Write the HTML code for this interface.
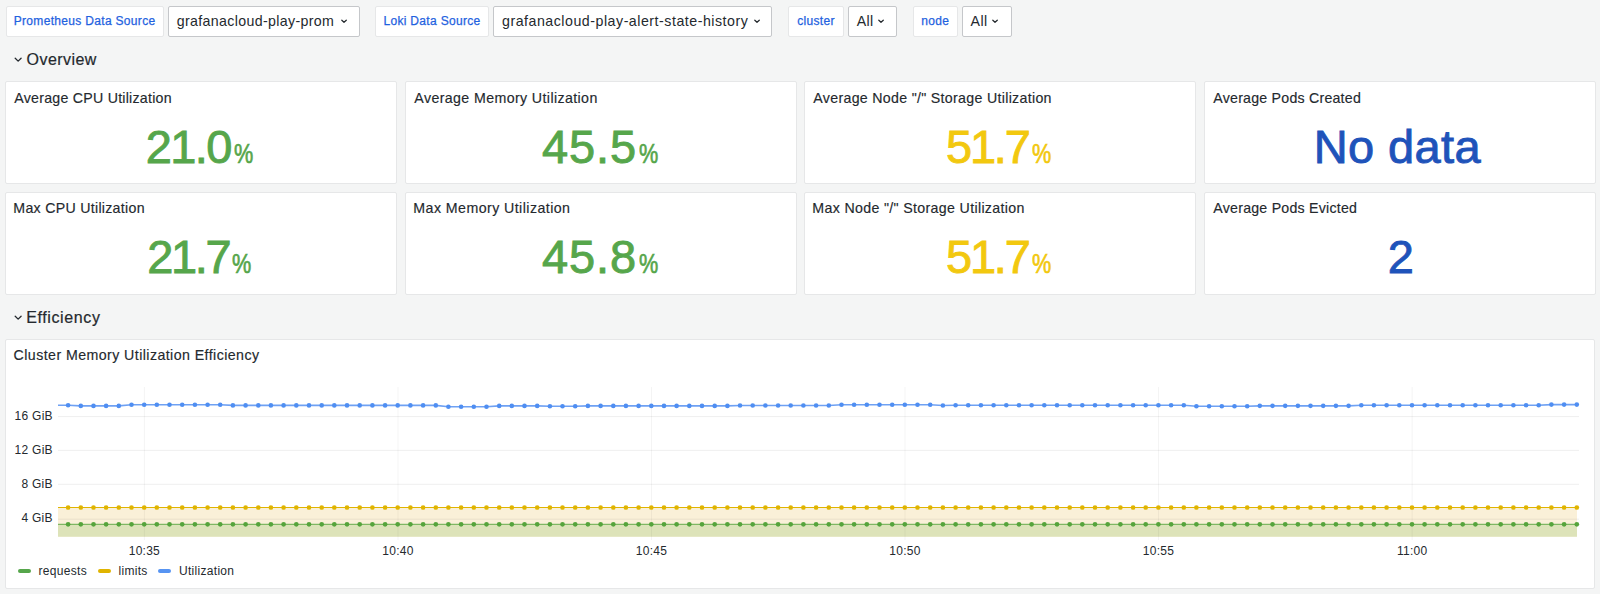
<!DOCTYPE html>
<html><head><meta charset="utf-8">
<style>
html,body{margin:0;padding:0;}
body{width:1600px;height:594px;overflow:hidden;background:#f4f5f5;position:relative;font-family:"Liberation Sans",sans-serif;color:#24292e;}
.vlab{position:absolute;top:6px;height:29px;background:#fff;border:1px solid #e6e7e8;border-radius:2px;color:#1f62e0;font-size:12px;line-height:28.6px;text-align:center;box-sizing:content-box;letter-spacing:0.32px;-webkit-text-stroke:0.25px #1f62e0;}
.vsel{position:absolute;top:6.2px;height:28.4px;background:#fff;border:1px solid #c5c7ca;border-radius:2px;font-size:14.2px;line-height:28px;color:#24292e;}
.vtxt{position:absolute;left:8px;top:0.2px;letter-spacing:0.35px;white-space:nowrap;}
.chev{position:absolute;top:11.5px;}
.row{position:absolute;font-size:16px;color:#24292e;letter-spacing:0.45px;-webkit-text-stroke:0.2px #24292e;}
.rchev{position:absolute;}
.panel{position:absolute;background:#fff;border:1px solid #e6e7e8;border-radius:2px;box-sizing:border-box;}
.ptitle{position:absolute;left:8.3px;top:7.6px;font-size:14.2px;letter-spacing:0.24px;-webkit-text-stroke:0.15px #24292e;white-space:nowrap;color:#24292e;}
.stat{position:absolute;left:0;right:0;top:37.6px;text-align:center;white-space:nowrap;}
.num{font-size:47px;letter-spacing:-1.6px;-webkit-text-stroke:0.9px currentColor;}
.unit{font-size:28.5px;margin-left:3px;margin-right:-3px;display:inline-block;transform:scaleX(0.76);transform-origin:left;-webkit-text-stroke:0.7px currentColor;}
.g{color:#56a64b;} .y{color:#f2c80f;} .b{color:#1f53ba;}
.cpanel{position:absolute;left:5px;top:339px;width:1590px;height:250px;background:#fff;border:1px solid #e6e7e8;border-radius:2px;box-sizing:border-box;}
.ax{font-family:"Liberation Sans",sans-serif;font-size:12px;fill:#24292e;letter-spacing:0.25px;}
.leg{position:absolute;top:564px;font-size:12px;color:#24292e;white-space:nowrap;letter-spacing:0.3px;}
.ldash{position:absolute;top:569.3px;width:13.2px;height:4px;border-radius:2px;}
</style></head><body>
<div class="vlab" style="left:5.6px;width:156px">Prometheus Data Source</div><div class="vsel" style="left:167.7px;width:190.4px"><span class="vtxt" style="letter-spacing:0.35px">grafanacloud-play-prom</span><span class="chev" style="left:171.5px"><svg width="8" height="6" viewBox="0 0 8 6" style="display:block"><path d="M1.8 1.2 L4 3.3 L6.3 1.2" fill="none" stroke="#24292e" stroke-width="1.25" stroke-linecap="round" stroke-linejoin="round"/></svg></span></div>
<div class="vlab" style="left:375px;width:112px">Loki Data Source</div><div class="vsel" style="left:493px;width:276.5px"><span class="vtxt" style="letter-spacing:0.52px">grafanacloud-play-alert-state-history</span><span class="chev" style="left:259px"><svg width="8" height="6" viewBox="0 0 8 6" style="display:block"><path d="M1.8 1.2 L4 3.3 L6.3 1.2" fill="none" stroke="#24292e" stroke-width="1.25" stroke-linecap="round" stroke-linejoin="round"/></svg></span></div>
<div class="vlab" style="left:787.7px;width:54.5px">cluster</div><div class="vsel" style="left:847.8px;width:47.5px"><span class="vtxt" style="letter-spacing:0.35px">All</span><span class="chev" style="left:28.5px"><svg width="8" height="6" viewBox="0 0 8 6" style="display:block"><path d="M1.8 1.2 L4 3.3 L6.3 1.2" fill="none" stroke="#24292e" stroke-width="1.25" stroke-linecap="round" stroke-linejoin="round"/></svg></span></div>
<div class="vlab" style="left:912.5px;width:43.5px">node</div><div class="vsel" style="left:961.6px;width:48.5px"><span class="vtxt" style="letter-spacing:0.35px">All</span><span class="chev" style="left:28.5px"><svg width="8" height="6" viewBox="0 0 8 6" style="display:block"><path d="M1.8 1.2 L4 3.3 L6.3 1.2" fill="none" stroke="#24292e" stroke-width="1.25" stroke-linecap="round" stroke-linejoin="round"/></svg></span></div>
<div class="rchev" style="left:14.3px;top:57.2px"><svg width="10" height="7" viewBox="0 0 10 7" style="display:block"><path d="M1.2 1.2 L4.15 4.15 L7.1 1.2" fill="none" stroke="#24292e" stroke-width="1.3" stroke-linecap="round" stroke-linejoin="round"/></svg></div>
<div class="row" style="left:26.6px;top:50.5px">Overview</div>
<div class="panel" style="left:5px;top:81px;width:392px;height:103px"><div class="ptitle" style="top:7.6px;letter-spacing:0.244px">Average CPU Utilization</div><div class="stat g" style="top:37.1px"><span class="num" style="letter-spacing:-1.6px">21.0</span><span class="unit">%</span></div></div>
<div class="panel" style="left:405px;top:81px;width:392px;height:103px"><div class="ptitle" style="top:7.6px;letter-spacing:0.391px">Average Memory Utilization</div><div class="stat g" style="top:37.1px"><span class="num" style="letter-spacing:0.9px;position:relative;left:1.2px">45.5</span><span class="unit">%</span></div></div>
<div class="panel" style="left:804px;top:81px;width:392px;height:103px"><div class="ptitle" style="top:7.6px;letter-spacing:0.306px">Average Node "/" Storage Utilization</div><div class="stat y" style="top:37.1px"><span class="num" style="letter-spacing:-2.2px">51.7</span><span class="unit">%</span></div></div>
<div class="panel" style="left:1204px;top:81px;width:392px;height:103px"><div class="ptitle" style="top:7.6px;letter-spacing:0.221px">Average Pods Created</div><div class="stat b" style="top:37.1px"><span class="num" style="letter-spacing:0.4px;position:relative;left:-2.6px">No data</span></div></div>
<div class="panel" style="left:5px;top:192px;width:392px;height:103px"><div class="ptitle" style="top:6.8999999999999995px;left:7.3px;letter-spacing:0.282px">Max CPU Utilization</div><div class="stat g" style="top:36.4px"><span class="num" style="letter-spacing:-2.3px">21.7</span><span class="unit">%</span></div></div>
<div class="panel" style="left:405px;top:192px;width:392px;height:103px"><div class="ptitle" style="top:6.8999999999999995px;left:7.3px;letter-spacing:0.439px">Max Memory Utilization</div><div class="stat g" style="top:36.4px"><span class="num" style="letter-spacing:0.9px;position:relative;left:1.2px">45.8</span><span class="unit">%</span></div></div>
<div class="panel" style="left:804px;top:192px;width:392px;height:103px"><div class="ptitle" style="top:6.8999999999999995px;left:7.3px;letter-spacing:0.336px">Max Node "/" Storage Utilization</div><div class="stat y" style="top:36.4px"><span class="num" style="letter-spacing:-2.2px">51.7</span><span class="unit">%</span></div></div>
<div class="panel" style="left:1204px;top:192px;width:392px;height:103px"><div class="ptitle" style="top:6.8999999999999995px;letter-spacing:0.229px">Average Pods Evicted</div><div class="stat b" style="top:36.4px"><span class="num" style="">2</span></div></div>
<div class="rchev" style="left:14.2px;top:315.2px"><svg width="10" height="7" viewBox="0 0 10 7" style="display:block"><path d="M1.2 1.2 L4.15 4.15 L7.1 1.2" fill="none" stroke="#24292e" stroke-width="1.3" stroke-linecap="round" stroke-linejoin="round"/></svg></div>
<div class="row" style="left:26.3px;top:308.7px;letter-spacing:0.6px">Efficiency</div>
<div class="cpanel"><div class="ptitle" style="top:6.6px;left:7.6px;letter-spacing:0.43px">Cluster Memory Utilization Efficiency</div></div>
<svg width="1600" height="594" viewBox="0 0 1600 594" style="position:absolute;left:0;top:0">
<rect x="58" y="507.5" width="1519" height="29.200000000000045" fill="#faf0d8"/>
<rect x="58" y="524.3" width="1519" height="12.400000000000091" fill="#dde3b9"/>
<line x1="58" y1="416.6" x2="1579" y2="416.6" stroke="rgba(36,41,46,0.075)" stroke-width="1"/>
<line x1="58" y1="450.4" x2="1579" y2="450.4" stroke="rgba(36,41,46,0.075)" stroke-width="1"/>
<line x1="58" y1="484.3" x2="1579" y2="484.3" stroke="rgba(36,41,46,0.075)" stroke-width="1"/>
<line x1="58" y1="519.2" x2="1579" y2="519.2" stroke="rgba(36,41,46,0.075)" stroke-width="1"/>
<line x1="144.4" y1="387" x2="144.4" y2="540" stroke="rgba(36,41,46,0.05)" stroke-width="1"/>
<line x1="398.0" y1="387" x2="398.0" y2="540" stroke="rgba(36,41,46,0.05)" stroke-width="1"/>
<line x1="651.5" y1="387" x2="651.5" y2="540" stroke="rgba(36,41,46,0.05)" stroke-width="1"/>
<line x1="905.0" y1="387" x2="905.0" y2="540" stroke="rgba(36,41,46,0.05)" stroke-width="1"/>
<line x1="1158.5" y1="387" x2="1158.5" y2="540" stroke="rgba(36,41,46,0.05)" stroke-width="1"/>
<line x1="1412.2" y1="387" x2="1412.2" y2="540" stroke="rgba(36,41,46,0.05)" stroke-width="1"/>
<line x1="58" y1="507.5" x2="1577" y2="507.5" stroke="#e0b400" stroke-width="1.2"/>
<line x1="58" y1="524.3" x2="1577" y2="524.3" stroke="#7fb763" stroke-width="1.3"/>
<polyline points="58.0,405.30 68.1,405.30 80.8,405.90 93.5,405.90 106.1,405.90 118.8,405.90 131.5,404.75 144.2,404.75 156.8,404.75 169.5,404.75 182.2,404.75 194.9,404.75 207.6,404.75 220.2,404.75 232.9,405.40 245.6,405.40 258.3,405.40 270.9,405.40 283.6,405.40 296.3,405.40 309.0,405.40 321.7,405.40 334.3,405.40 347.0,405.40 359.7,405.40 372.4,405.40 385.1,405.40 397.7,405.40 410.4,405.40 423.1,405.40 435.8,405.40 448.4,406.80 461.1,406.80 473.8,406.80 486.5,406.80 499.2,405.90 511.8,405.90 524.5,405.90 537.2,405.90 549.9,406.25 562.5,406.25 575.2,406.25 587.9,405.90 600.6,405.90 613.3,405.90 625.9,405.90 638.6,405.90 651.3,405.90 664.0,405.90 676.6,405.90 689.3,405.90 702.0,405.90 714.7,405.90 727.4,405.90 740.0,405.50 752.7,405.50 765.4,405.50 778.1,405.50 790.7,405.50 803.4,405.50 816.1,405.50 828.8,405.50 841.5,404.75 854.1,404.75 866.8,404.75 879.5,404.75 892.2,404.75 904.8,404.75 917.5,404.75 930.2,404.75 942.9,405.50 955.6,405.30 968.2,405.30 980.9,405.30 993.6,405.30 1006.3,405.30 1019.0,405.30 1031.6,405.30 1044.3,405.30 1057.0,405.30 1069.7,405.30 1082.3,405.30 1095.0,405.30 1107.7,405.30 1120.4,405.30 1133.1,405.30 1145.7,405.30 1158.4,405.30 1171.1,405.30 1183.8,405.30 1196.4,406.25 1209.1,406.25 1221.8,406.25 1234.5,406.25 1247.2,406.25 1259.8,405.85 1272.5,405.85 1285.2,405.85 1297.9,405.85 1310.5,405.85 1323.2,405.85 1335.9,405.85 1348.6,405.85 1361.3,405.20 1373.9,405.20 1386.6,405.20 1399.3,405.20 1412.0,405.20 1424.6,405.20 1437.3,405.20 1450.0,405.20 1462.7,405.20 1475.4,405.20 1488.0,405.20 1500.7,405.20 1513.4,405.20 1526.1,405.20 1538.7,405.20 1551.4,404.60 1564.1,404.60 1576.8,404.60" fill="none" stroke="#6fa1f3" stroke-width="1.6"/>
<g fill="#e0b400"><circle cx="68.1" cy="507.5" r="2.35"/><circle cx="80.8" cy="507.5" r="2.35"/><circle cx="93.5" cy="507.5" r="2.35"/><circle cx="106.1" cy="507.5" r="2.35"/><circle cx="118.8" cy="507.5" r="2.35"/><circle cx="131.5" cy="507.5" r="2.35"/><circle cx="144.2" cy="507.5" r="2.35"/><circle cx="156.8" cy="507.5" r="2.35"/><circle cx="169.5" cy="507.5" r="2.35"/><circle cx="182.2" cy="507.5" r="2.35"/><circle cx="194.9" cy="507.5" r="2.35"/><circle cx="207.6" cy="507.5" r="2.35"/><circle cx="220.2" cy="507.5" r="2.35"/><circle cx="232.9" cy="507.5" r="2.35"/><circle cx="245.6" cy="507.5" r="2.35"/><circle cx="258.3" cy="507.5" r="2.35"/><circle cx="270.9" cy="507.5" r="2.35"/><circle cx="283.6" cy="507.5" r="2.35"/><circle cx="296.3" cy="507.5" r="2.35"/><circle cx="309.0" cy="507.5" r="2.35"/><circle cx="321.7" cy="507.5" r="2.35"/><circle cx="334.3" cy="507.5" r="2.35"/><circle cx="347.0" cy="507.5" r="2.35"/><circle cx="359.7" cy="507.5" r="2.35"/><circle cx="372.4" cy="507.5" r="2.35"/><circle cx="385.1" cy="507.5" r="2.35"/><circle cx="397.7" cy="507.5" r="2.35"/><circle cx="410.4" cy="507.5" r="2.35"/><circle cx="423.1" cy="507.5" r="2.35"/><circle cx="435.8" cy="507.5" r="2.35"/><circle cx="448.4" cy="507.5" r="2.35"/><circle cx="461.1" cy="507.5" r="2.35"/><circle cx="473.8" cy="507.5" r="2.35"/><circle cx="486.5" cy="507.5" r="2.35"/><circle cx="499.2" cy="507.5" r="2.35"/><circle cx="511.8" cy="507.5" r="2.35"/><circle cx="524.5" cy="507.5" r="2.35"/><circle cx="537.2" cy="507.5" r="2.35"/><circle cx="549.9" cy="507.5" r="2.35"/><circle cx="562.5" cy="507.5" r="2.35"/><circle cx="575.2" cy="507.5" r="2.35"/><circle cx="587.9" cy="507.5" r="2.35"/><circle cx="600.6" cy="507.5" r="2.35"/><circle cx="613.3" cy="507.5" r="2.35"/><circle cx="625.9" cy="507.5" r="2.35"/><circle cx="638.6" cy="507.5" r="2.35"/><circle cx="651.3" cy="507.5" r="2.35"/><circle cx="664.0" cy="507.5" r="2.35"/><circle cx="676.6" cy="507.5" r="2.35"/><circle cx="689.3" cy="507.5" r="2.35"/><circle cx="702.0" cy="507.5" r="2.35"/><circle cx="714.7" cy="507.5" r="2.35"/><circle cx="727.4" cy="507.5" r="2.35"/><circle cx="740.0" cy="507.5" r="2.35"/><circle cx="752.7" cy="507.5" r="2.35"/><circle cx="765.4" cy="507.5" r="2.35"/><circle cx="778.1" cy="507.5" r="2.35"/><circle cx="790.7" cy="507.5" r="2.35"/><circle cx="803.4" cy="507.5" r="2.35"/><circle cx="816.1" cy="507.5" r="2.35"/><circle cx="828.8" cy="507.5" r="2.35"/><circle cx="841.5" cy="507.5" r="2.35"/><circle cx="854.1" cy="507.5" r="2.35"/><circle cx="866.8" cy="507.5" r="2.35"/><circle cx="879.5" cy="507.5" r="2.35"/><circle cx="892.2" cy="507.5" r="2.35"/><circle cx="904.8" cy="507.5" r="2.35"/><circle cx="917.5" cy="507.5" r="2.35"/><circle cx="930.2" cy="507.5" r="2.35"/><circle cx="942.9" cy="507.5" r="2.35"/><circle cx="955.6" cy="507.5" r="2.35"/><circle cx="968.2" cy="507.5" r="2.35"/><circle cx="980.9" cy="507.5" r="2.35"/><circle cx="993.6" cy="507.5" r="2.35"/><circle cx="1006.3" cy="507.5" r="2.35"/><circle cx="1019.0" cy="507.5" r="2.35"/><circle cx="1031.6" cy="507.5" r="2.35"/><circle cx="1044.3" cy="507.5" r="2.35"/><circle cx="1057.0" cy="507.5" r="2.35"/><circle cx="1069.7" cy="507.5" r="2.35"/><circle cx="1082.3" cy="507.5" r="2.35"/><circle cx="1095.0" cy="507.5" r="2.35"/><circle cx="1107.7" cy="507.5" r="2.35"/><circle cx="1120.4" cy="507.5" r="2.35"/><circle cx="1133.1" cy="507.5" r="2.35"/><circle cx="1145.7" cy="507.5" r="2.35"/><circle cx="1158.4" cy="507.5" r="2.35"/><circle cx="1171.1" cy="507.5" r="2.35"/><circle cx="1183.8" cy="507.5" r="2.35"/><circle cx="1196.4" cy="507.5" r="2.35"/><circle cx="1209.1" cy="507.5" r="2.35"/><circle cx="1221.8" cy="507.5" r="2.35"/><circle cx="1234.5" cy="507.5" r="2.35"/><circle cx="1247.2" cy="507.5" r="2.35"/><circle cx="1259.8" cy="507.5" r="2.35"/><circle cx="1272.5" cy="507.5" r="2.35"/><circle cx="1285.2" cy="507.5" r="2.35"/><circle cx="1297.9" cy="507.5" r="2.35"/><circle cx="1310.5" cy="507.5" r="2.35"/><circle cx="1323.2" cy="507.5" r="2.35"/><circle cx="1335.9" cy="507.5" r="2.35"/><circle cx="1348.6" cy="507.5" r="2.35"/><circle cx="1361.3" cy="507.5" r="2.35"/><circle cx="1373.9" cy="507.5" r="2.35"/><circle cx="1386.6" cy="507.5" r="2.35"/><circle cx="1399.3" cy="507.5" r="2.35"/><circle cx="1412.0" cy="507.5" r="2.35"/><circle cx="1424.6" cy="507.5" r="2.35"/><circle cx="1437.3" cy="507.5" r="2.35"/><circle cx="1450.0" cy="507.5" r="2.35"/><circle cx="1462.7" cy="507.5" r="2.35"/><circle cx="1475.4" cy="507.5" r="2.35"/><circle cx="1488.0" cy="507.5" r="2.35"/><circle cx="1500.7" cy="507.5" r="2.35"/><circle cx="1513.4" cy="507.5" r="2.35"/><circle cx="1526.1" cy="507.5" r="2.35"/><circle cx="1538.7" cy="507.5" r="2.35"/><circle cx="1551.4" cy="507.5" r="2.35"/><circle cx="1564.1" cy="507.5" r="2.35"/><circle cx="1576.8" cy="507.5" r="2.35"/></g>
<g fill="#56a43c"><circle cx="68.1" cy="524.3" r="2.35"/><circle cx="80.8" cy="524.3" r="2.35"/><circle cx="93.5" cy="524.3" r="2.35"/><circle cx="106.1" cy="524.3" r="2.35"/><circle cx="118.8" cy="524.3" r="2.35"/><circle cx="131.5" cy="524.3" r="2.35"/><circle cx="144.2" cy="524.3" r="2.35"/><circle cx="156.8" cy="524.3" r="2.35"/><circle cx="169.5" cy="524.3" r="2.35"/><circle cx="182.2" cy="524.3" r="2.35"/><circle cx="194.9" cy="524.3" r="2.35"/><circle cx="207.6" cy="524.3" r="2.35"/><circle cx="220.2" cy="524.3" r="2.35"/><circle cx="232.9" cy="524.3" r="2.35"/><circle cx="245.6" cy="524.3" r="2.35"/><circle cx="258.3" cy="524.3" r="2.35"/><circle cx="270.9" cy="524.3" r="2.35"/><circle cx="283.6" cy="524.3" r="2.35"/><circle cx="296.3" cy="524.3" r="2.35"/><circle cx="309.0" cy="524.3" r="2.35"/><circle cx="321.7" cy="524.3" r="2.35"/><circle cx="334.3" cy="524.3" r="2.35"/><circle cx="347.0" cy="524.3" r="2.35"/><circle cx="359.7" cy="524.3" r="2.35"/><circle cx="372.4" cy="524.3" r="2.35"/><circle cx="385.1" cy="524.3" r="2.35"/><circle cx="397.7" cy="524.3" r="2.35"/><circle cx="410.4" cy="524.3" r="2.35"/><circle cx="423.1" cy="524.3" r="2.35"/><circle cx="435.8" cy="524.3" r="2.35"/><circle cx="448.4" cy="524.3" r="2.35"/><circle cx="461.1" cy="524.3" r="2.35"/><circle cx="473.8" cy="524.3" r="2.35"/><circle cx="486.5" cy="524.3" r="2.35"/><circle cx="499.2" cy="524.3" r="2.35"/><circle cx="511.8" cy="524.3" r="2.35"/><circle cx="524.5" cy="524.3" r="2.35"/><circle cx="537.2" cy="524.3" r="2.35"/><circle cx="549.9" cy="524.3" r="2.35"/><circle cx="562.5" cy="524.3" r="2.35"/><circle cx="575.2" cy="524.3" r="2.35"/><circle cx="587.9" cy="524.3" r="2.35"/><circle cx="600.6" cy="524.3" r="2.35"/><circle cx="613.3" cy="524.3" r="2.35"/><circle cx="625.9" cy="524.3" r="2.35"/><circle cx="638.6" cy="524.3" r="2.35"/><circle cx="651.3" cy="524.3" r="2.35"/><circle cx="664.0" cy="524.3" r="2.35"/><circle cx="676.6" cy="524.3" r="2.35"/><circle cx="689.3" cy="524.3" r="2.35"/><circle cx="702.0" cy="524.3" r="2.35"/><circle cx="714.7" cy="524.3" r="2.35"/><circle cx="727.4" cy="524.3" r="2.35"/><circle cx="740.0" cy="524.3" r="2.35"/><circle cx="752.7" cy="524.3" r="2.35"/><circle cx="765.4" cy="524.3" r="2.35"/><circle cx="778.1" cy="524.3" r="2.35"/><circle cx="790.7" cy="524.3" r="2.35"/><circle cx="803.4" cy="524.3" r="2.35"/><circle cx="816.1" cy="524.3" r="2.35"/><circle cx="828.8" cy="524.3" r="2.35"/><circle cx="841.5" cy="524.3" r="2.35"/><circle cx="854.1" cy="524.3" r="2.35"/><circle cx="866.8" cy="524.3" r="2.35"/><circle cx="879.5" cy="524.3" r="2.35"/><circle cx="892.2" cy="524.3" r="2.35"/><circle cx="904.8" cy="524.3" r="2.35"/><circle cx="917.5" cy="524.3" r="2.35"/><circle cx="930.2" cy="524.3" r="2.35"/><circle cx="942.9" cy="524.3" r="2.35"/><circle cx="955.6" cy="524.3" r="2.35"/><circle cx="968.2" cy="524.3" r="2.35"/><circle cx="980.9" cy="524.3" r="2.35"/><circle cx="993.6" cy="524.3" r="2.35"/><circle cx="1006.3" cy="524.3" r="2.35"/><circle cx="1019.0" cy="524.3" r="2.35"/><circle cx="1031.6" cy="524.3" r="2.35"/><circle cx="1044.3" cy="524.3" r="2.35"/><circle cx="1057.0" cy="524.3" r="2.35"/><circle cx="1069.7" cy="524.3" r="2.35"/><circle cx="1082.3" cy="524.3" r="2.35"/><circle cx="1095.0" cy="524.3" r="2.35"/><circle cx="1107.7" cy="524.3" r="2.35"/><circle cx="1120.4" cy="524.3" r="2.35"/><circle cx="1133.1" cy="524.3" r="2.35"/><circle cx="1145.7" cy="524.3" r="2.35"/><circle cx="1158.4" cy="524.3" r="2.35"/><circle cx="1171.1" cy="524.3" r="2.35"/><circle cx="1183.8" cy="524.3" r="2.35"/><circle cx="1196.4" cy="524.3" r="2.35"/><circle cx="1209.1" cy="524.3" r="2.35"/><circle cx="1221.8" cy="524.3" r="2.35"/><circle cx="1234.5" cy="524.3" r="2.35"/><circle cx="1247.2" cy="524.3" r="2.35"/><circle cx="1259.8" cy="524.3" r="2.35"/><circle cx="1272.5" cy="524.3" r="2.35"/><circle cx="1285.2" cy="524.3" r="2.35"/><circle cx="1297.9" cy="524.3" r="2.35"/><circle cx="1310.5" cy="524.3" r="2.35"/><circle cx="1323.2" cy="524.3" r="2.35"/><circle cx="1335.9" cy="524.3" r="2.35"/><circle cx="1348.6" cy="524.3" r="2.35"/><circle cx="1361.3" cy="524.3" r="2.35"/><circle cx="1373.9" cy="524.3" r="2.35"/><circle cx="1386.6" cy="524.3" r="2.35"/><circle cx="1399.3" cy="524.3" r="2.35"/><circle cx="1412.0" cy="524.3" r="2.35"/><circle cx="1424.6" cy="524.3" r="2.35"/><circle cx="1437.3" cy="524.3" r="2.35"/><circle cx="1450.0" cy="524.3" r="2.35"/><circle cx="1462.7" cy="524.3" r="2.35"/><circle cx="1475.4" cy="524.3" r="2.35"/><circle cx="1488.0" cy="524.3" r="2.35"/><circle cx="1500.7" cy="524.3" r="2.35"/><circle cx="1513.4" cy="524.3" r="2.35"/><circle cx="1526.1" cy="524.3" r="2.35"/><circle cx="1538.7" cy="524.3" r="2.35"/><circle cx="1551.4" cy="524.3" r="2.35"/><circle cx="1564.1" cy="524.3" r="2.35"/><circle cx="1576.8" cy="524.3" r="2.35"/></g>
<g fill="#4f8ef2"><circle cx="68.1" cy="405.30" r="2.3"/><circle cx="80.8" cy="405.90" r="2.3"/><circle cx="93.5" cy="405.90" r="2.3"/><circle cx="106.1" cy="405.90" r="2.3"/><circle cx="118.8" cy="405.90" r="2.3"/><circle cx="131.5" cy="404.75" r="2.3"/><circle cx="144.2" cy="404.75" r="2.3"/><circle cx="156.8" cy="404.75" r="2.3"/><circle cx="169.5" cy="404.75" r="2.3"/><circle cx="182.2" cy="404.75" r="2.3"/><circle cx="194.9" cy="404.75" r="2.3"/><circle cx="207.6" cy="404.75" r="2.3"/><circle cx="220.2" cy="404.75" r="2.3"/><circle cx="232.9" cy="405.40" r="2.3"/><circle cx="245.6" cy="405.40" r="2.3"/><circle cx="258.3" cy="405.40" r="2.3"/><circle cx="270.9" cy="405.40" r="2.3"/><circle cx="283.6" cy="405.40" r="2.3"/><circle cx="296.3" cy="405.40" r="2.3"/><circle cx="309.0" cy="405.40" r="2.3"/><circle cx="321.7" cy="405.40" r="2.3"/><circle cx="334.3" cy="405.40" r="2.3"/><circle cx="347.0" cy="405.40" r="2.3"/><circle cx="359.7" cy="405.40" r="2.3"/><circle cx="372.4" cy="405.40" r="2.3"/><circle cx="385.1" cy="405.40" r="2.3"/><circle cx="397.7" cy="405.40" r="2.3"/><circle cx="410.4" cy="405.40" r="2.3"/><circle cx="423.1" cy="405.40" r="2.3"/><circle cx="435.8" cy="405.40" r="2.3"/><circle cx="448.4" cy="406.80" r="2.3"/><circle cx="461.1" cy="406.80" r="2.3"/><circle cx="473.8" cy="406.80" r="2.3"/><circle cx="486.5" cy="406.80" r="2.3"/><circle cx="499.2" cy="405.90" r="2.3"/><circle cx="511.8" cy="405.90" r="2.3"/><circle cx="524.5" cy="405.90" r="2.3"/><circle cx="537.2" cy="405.90" r="2.3"/><circle cx="549.9" cy="406.25" r="2.3"/><circle cx="562.5" cy="406.25" r="2.3"/><circle cx="575.2" cy="406.25" r="2.3"/><circle cx="587.9" cy="405.90" r="2.3"/><circle cx="600.6" cy="405.90" r="2.3"/><circle cx="613.3" cy="405.90" r="2.3"/><circle cx="625.9" cy="405.90" r="2.3"/><circle cx="638.6" cy="405.90" r="2.3"/><circle cx="651.3" cy="405.90" r="2.3"/><circle cx="664.0" cy="405.90" r="2.3"/><circle cx="676.6" cy="405.90" r="2.3"/><circle cx="689.3" cy="405.90" r="2.3"/><circle cx="702.0" cy="405.90" r="2.3"/><circle cx="714.7" cy="405.90" r="2.3"/><circle cx="727.4" cy="405.90" r="2.3"/><circle cx="740.0" cy="405.50" r="2.3"/><circle cx="752.7" cy="405.50" r="2.3"/><circle cx="765.4" cy="405.50" r="2.3"/><circle cx="778.1" cy="405.50" r="2.3"/><circle cx="790.7" cy="405.50" r="2.3"/><circle cx="803.4" cy="405.50" r="2.3"/><circle cx="816.1" cy="405.50" r="2.3"/><circle cx="828.8" cy="405.50" r="2.3"/><circle cx="841.5" cy="404.75" r="2.3"/><circle cx="854.1" cy="404.75" r="2.3"/><circle cx="866.8" cy="404.75" r="2.3"/><circle cx="879.5" cy="404.75" r="2.3"/><circle cx="892.2" cy="404.75" r="2.3"/><circle cx="904.8" cy="404.75" r="2.3"/><circle cx="917.5" cy="404.75" r="2.3"/><circle cx="930.2" cy="404.75" r="2.3"/><circle cx="942.9" cy="405.50" r="2.3"/><circle cx="955.6" cy="405.30" r="2.3"/><circle cx="968.2" cy="405.30" r="2.3"/><circle cx="980.9" cy="405.30" r="2.3"/><circle cx="993.6" cy="405.30" r="2.3"/><circle cx="1006.3" cy="405.30" r="2.3"/><circle cx="1019.0" cy="405.30" r="2.3"/><circle cx="1031.6" cy="405.30" r="2.3"/><circle cx="1044.3" cy="405.30" r="2.3"/><circle cx="1057.0" cy="405.30" r="2.3"/><circle cx="1069.7" cy="405.30" r="2.3"/><circle cx="1082.3" cy="405.30" r="2.3"/><circle cx="1095.0" cy="405.30" r="2.3"/><circle cx="1107.7" cy="405.30" r="2.3"/><circle cx="1120.4" cy="405.30" r="2.3"/><circle cx="1133.1" cy="405.30" r="2.3"/><circle cx="1145.7" cy="405.30" r="2.3"/><circle cx="1158.4" cy="405.30" r="2.3"/><circle cx="1171.1" cy="405.30" r="2.3"/><circle cx="1183.8" cy="405.30" r="2.3"/><circle cx="1196.4" cy="406.25" r="2.3"/><circle cx="1209.1" cy="406.25" r="2.3"/><circle cx="1221.8" cy="406.25" r="2.3"/><circle cx="1234.5" cy="406.25" r="2.3"/><circle cx="1247.2" cy="406.25" r="2.3"/><circle cx="1259.8" cy="405.85" r="2.3"/><circle cx="1272.5" cy="405.85" r="2.3"/><circle cx="1285.2" cy="405.85" r="2.3"/><circle cx="1297.9" cy="405.85" r="2.3"/><circle cx="1310.5" cy="405.85" r="2.3"/><circle cx="1323.2" cy="405.85" r="2.3"/><circle cx="1335.9" cy="405.85" r="2.3"/><circle cx="1348.6" cy="405.85" r="2.3"/><circle cx="1361.3" cy="405.20" r="2.3"/><circle cx="1373.9" cy="405.20" r="2.3"/><circle cx="1386.6" cy="405.20" r="2.3"/><circle cx="1399.3" cy="405.20" r="2.3"/><circle cx="1412.0" cy="405.20" r="2.3"/><circle cx="1424.6" cy="405.20" r="2.3"/><circle cx="1437.3" cy="405.20" r="2.3"/><circle cx="1450.0" cy="405.20" r="2.3"/><circle cx="1462.7" cy="405.20" r="2.3"/><circle cx="1475.4" cy="405.20" r="2.3"/><circle cx="1488.0" cy="405.20" r="2.3"/><circle cx="1500.7" cy="405.20" r="2.3"/><circle cx="1513.4" cy="405.20" r="2.3"/><circle cx="1526.1" cy="405.20" r="2.3"/><circle cx="1538.7" cy="405.20" r="2.3"/><circle cx="1551.4" cy="404.60" r="2.3"/><circle cx="1564.1" cy="404.60" r="2.3"/><circle cx="1576.8" cy="404.60" r="2.3"/></g>
<text x="52.8" y="419.8" text-anchor="end" class="ax">16 GiB</text>
<text x="52.8" y="453.59999999999997" text-anchor="end" class="ax">12 GiB</text>
<text x="52.8" y="487.5" text-anchor="end" class="ax">8 GiB</text>
<text x="52.8" y="522.4000000000001" text-anchor="end" class="ax">4 GiB</text>
<text x="144.4" y="554.8" text-anchor="middle" class="ax">10:35</text>
<text x="398.0" y="554.8" text-anchor="middle" class="ax">10:40</text>
<text x="651.5" y="554.8" text-anchor="middle" class="ax">10:45</text>
<text x="905.0" y="554.8" text-anchor="middle" class="ax">10:50</text>
<text x="1158.5" y="554.8" text-anchor="middle" class="ax">10:55</text>
<text x="1412.2" y="554.8" text-anchor="middle" class="ax">11:00</text>
</svg>
<div class="ldash" style="left:17.7px;background:#56a64b"></div>
<div class="leg" style="left:38.5px">requests</div>
<div class="ldash" style="left:98px;background:#e0b400"></div>
<div class="leg" style="left:118.5px">limits</div>
<div class="ldash" style="left:158px;background:#5794f2"></div>
<div class="leg" style="left:179px">Utilization</div>
</body></html>
